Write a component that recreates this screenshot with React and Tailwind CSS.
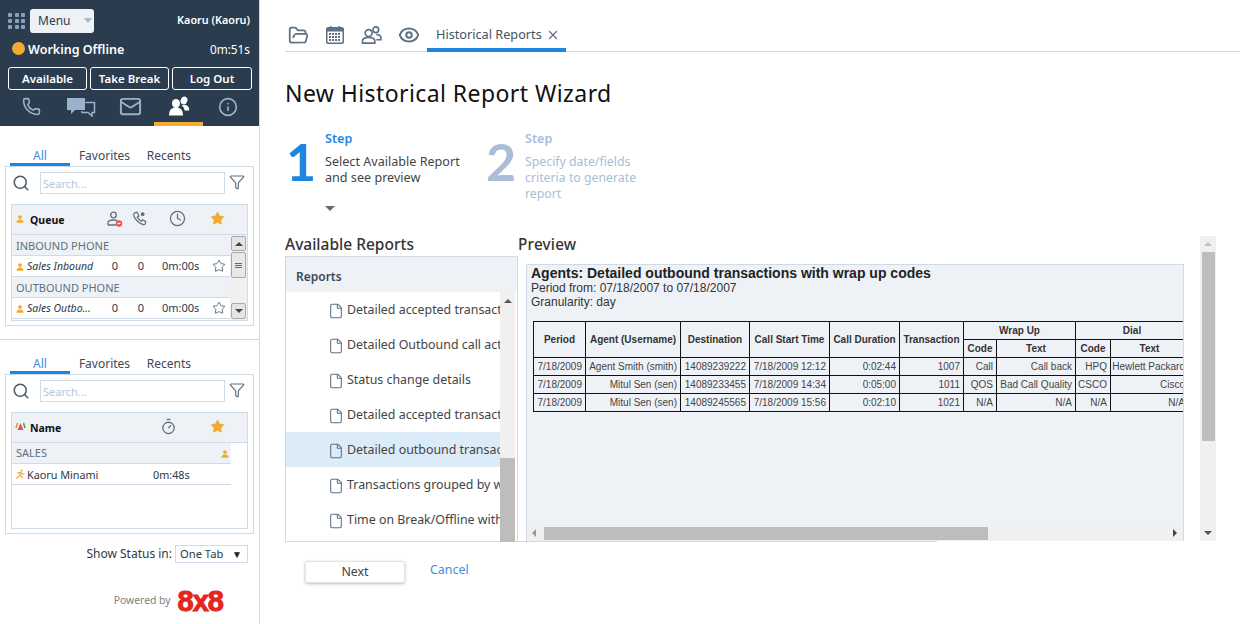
import React from "react";
import { Phone, Mail, Info, Search, Clock, Star, FolderOpen, Eye, X, File, Funnel, Timer } from "lucide-react";

const noto = "font-['Noto_Sans','Open_Sans',sans-serif]";

function Person({ className = "" }) {
  return (
    <svg viewBox="0 0 10 10" className={className} fill="#f0ab31">
      <circle cx="5" cy="2.6" r="2.4" />
      <path d="M0.5 9.8 C0.5 6.5 2.5 5.6 5 5.6 C7.5 5.6 9.5 6.5 9.5 9.8 Z" />
    </svg>
  );
}

function People({ className = "", stroke = "#5e7081" }) {
  return (
    <svg viewBox="0 0 22 20" className={className} fill="none" stroke={stroke} strokeWidth="1.7">
      <circle cx="8" cy="8" r="3.6" />
      <path d="M1.5 18.5 V16.5 C1.5 13.5 4 12.5 8 12.5 C12 12.5 14.5 13.5 14.5 16.5 V18.5 Z" />
      <circle cx="15.5" cy="4.5" r="3" />
      <path d="M16 9.5 C19 9.5 20.8 10.5 20.8 13 V15 H16" />
    </svg>
  );
}

function Tabs() {
  return (
    <div className="flex h-[20px] pl-[10px] text-[12px] leading-[20px] text-[#3a4a58]">
      <div className="w-[60px] border-b-[3px] border-[#1f86e0] text-center text-[#3b8ee0]">All</div>
      <div className="w-[69px] text-center">Favorites</div>
      <div className="w-[60px] text-center">Recents</div>
    </div>
  );
}

function SearchRow() {
  return (
    <div className="flex items-center h-[22px] pl-[7px]">
      <Search size={18} strokeWidth={2} className="text-[#4a5a68] w-[18px] -ml-[1px]" />
      <div className="ml-[10px] w-[185px] h-[22px] border border-[#cfdbe8] pl-[2px] text-[11px] leading-[22px] text-[#b4c4da]">Search...</div>
      <Funnel size={16} strokeWidth={1.8} className="ml-[4px] text-[#5e7081] -mt-[3px]" />
    </div>
  );
}

function QueueRow({ name }) {
  return (
    <div className="flex items-center h-[21px] pt-[1px] border-b border-[#cfdbe8] text-[11px] text-[#2b3a48] bg-white">
      <Person className="w-[8px] h-[8px] ml-[4px] mr-[3px] shrink-0" />
      <div className="w-[75px] italic truncate text-[10.5px]">{name}</div>
      <div className="w-[26px] text-center">0</div>
      <div className="w-[26px] text-center">0</div>
      <div className="w-[42px] ml-[8px] whitespace-nowrap">0m:00s</div>
      <Star size={14} strokeWidth={1.7} className="ml-[8px] text-[#5e7081] -mt-[2px]" />
    </div>
  );
}

function ScrollTri({ dir, color, className = "" }) {
  const m = {
    up: "border-l-[4px] border-r-[4px] border-b-[4px] border-l-transparent border-r-transparent",
    down: "border-l-[4px] border-r-[4px] border-t-[4px] border-l-transparent border-r-transparent",
  };
  return <span className={`w-0 h-0 ${m[dir]} ${color} ${className}`} />;
}

function Sidebar() {
  return (
    <div className={`w-[260px] shrink-0 h-[624px] border-r border-[#cfd8e3] ${noto}`}>
      <div className="h-[126px] bg-[#2b3c4e] text-white">
        <div className="flex items-center h-[40px] pl-[8px] pr-[9px] pt-[1px]">
          <div className="grid grid-cols-3 gap-[2px] w-[18px]">
            {Array.from({ length: 9 }).map((_, i) => (
              <div key={i} className="w-[4px] h-[4px] bg-[#8aa0b8] rounded-[1px]" />
            ))}
          </div>
          <div className="ml-[4px] w-[64px] h-[24px] bg-[#eef2f7] rounded-[3px] flex items-center pl-[8px] text-[12px] text-[#2b3c4e]">
            Menu
            <span className="ml-[14px] w-0 h-0 border-l-[4px] border-r-[4px] border-t-[5px] border-l-transparent border-r-transparent border-t-[#a9b7c6]" />
          </div>
          <div className="ml-auto text-[10.8px] font-semibold">Kaoru (Kaoru)</div>
        </div>
        <div className="flex items-center h-[20px] pl-[12px] pr-[9px]">
          <div className="w-[13px] h-[13px] rounded-full bg-[#f2ab33] -mt-[3px]" />
          <div className="ml-[3px] text-[12.5px] font-semibold">Working Offline</div>
          <div className="ml-auto text-[11.8px]">0m:51s</div>
        </div>
        <div className="flex gap-[3px] pl-[8px] mt-[7px]">
          {[["Available", "w-[79px]"], ["Take Break", "w-[79px]"], ["Log Out", "w-[80px]"]].map(([t, w]) => (
            <div key={t} className={`${w} h-[23px] border border-white rounded-[3px] text-[11.5px] font-semibold text-center leading-[21px]`}>{t}</div>
          ))}
        </div>
        <div className="flex h-[36px] pl-[8px]">
          <div className="w-[46px] flex justify-center pt-[7px]">
            <Phone size={19} strokeWidth={2} className="text-[#9cb2cc]" />
          </div>
          <div className="w-[53px] flex justify-center pt-[7px]">
            <svg width="30" height="20" viewBox="0 0 30 20">
              <path d="M1 1 H19 V13 H9 L5 17 V13 H1 Z" fill="#9cb2cc" />
              <path d="M19.5 5.5 H28.5 V15.5 H26 V19 L22 15.5 H16 V14" fill="none" stroke="#9cb2cc" strokeWidth="1.5" />
            </svg>
          </div>
          <div className="w-[47px] flex justify-center pt-[5px]">
            <Mail size={23} strokeWidth={2} className="text-[#9cb2cc]" />
          </div>
          <div className="w-[49px] flex justify-center pt-[6px] border-b-[4px] border-[#f2ab33]">
            <svg width="22" height="20" viewBox="0 0 22 20" fill="white">
              <ellipse cx="8" cy="7.5" rx="4" ry="4.5" />
              <path d="M1 19.5 C1 13.5 4 11.5 8 11.5 C12 11.5 15 13.5 15 19.5 Z" />
              <ellipse cx="16" cy="4.5" rx="3.3" ry="4" transform="rotate(20 16 4.5)" />
              <path d="M13.5 9.5 C15 9 16.5 9 18 9 C20.5 10 21.8 12 21 14.5 H16.5 C16.5 12.5 15.5 10.5 13.5 9.5 Z" />
            </svg>
          </div>
          <div className="w-[50px] flex justify-center pt-[7px]">
            <Info size={20} strokeWidth={2} className="text-[#9cb2cc]" />
          </div>
        </div>
      </div>

      <div className="mt-[20px]">
        <Tabs />
        <div className="mx-[5px] h-[160px] border border-[#cfdbe8] pt-[5px]">
          <SearchRow />
          <div className="mx-[5px] mt-[10px] h-[117px] border border-[#cfdbe8]">
            <div className="flex items-center h-[30px] bg-[#eef2f7] border-b border-[#cfdbe8] text-[#111]">
              <Person className="w-[8px] h-[8px] ml-[4px] shrink-0 -mt-[2px]" />
              <div className="ml-[6px] mt-[2px] text-[10.5px] font-bold w-[76px]">Queue</div>
              <svg width="16" height="16" viewBox="0 0 16 16" fill="none" stroke="#5e7081" strokeWidth="1.3" className="ml-[1px] -mt-[2px]">
                <circle cx="6.5" cy="4" r="2.8" />
                <path d="M1 14 V12 C1 10 3 9 6.5 9 C8 9 9 9.2 10 9.6 M1 14 H9" />
                <circle cx="12" cy="12.5" r="3.2" fill="#e8505b" stroke="none" />
                <path d="M10.5 12.5 H13.5" stroke="white" />
              </svg>
              <svg width="15" height="15" viewBox="0 0 24 24" fill="none" stroke="#5e7081" strokeWidth="2" className="ml-[9px] -mt-[3px]">
                <path d="M4 3 L8 2 L11 8 L8.5 10 C10 13 12 15 15 16.5 L17 14 L22 17 L21 21 C20 22 18 22 16 21 C9 18 5 13 3 8 C2.5 6 3 4 4 3 Z" />
                <circle cx="17" cy="5" r="3" fill="#5e7081" stroke="none" />
              </svg>
              <Clock size={17} strokeWidth={1.8} className="ml-[22px] text-[#5e7081] -mt-[3px]" />
              <Star size={15} fill="#f0ab31" strokeWidth={1} className="ml-[24px] text-[#f0ab31] -mt-[3px]" />
            </div>
            <div className="flex h-[85px]">
              <div className="w-[219px]">
                <div className="h-[21px] bg-[#eef2f7] border-b border-[#cfdbe8] pl-[4px] text-[11px] leading-[22px] text-[#5e7081]">INBOUND PHONE</div>
                <QueueRow name="Sales Inbound" />
                <div className="h-[21px] bg-[#eef2f7] border-b border-[#cfdbe8] pl-[4px] text-[11px] leading-[22px] text-[#5e7081]">OUTBOUND PHONE</div>
                <QueueRow name="Sales Outbo..." />
              </div>
              <div className="w-[17px] bg-[#f0f0f0] flex flex-col pt-[1px] px-[1px] pb-[1px]">
                <div className="h-[15px] rounded-[2px] border border-[#a9a9a9] bg-[#e4e4e4] flex items-center justify-center">
                  <ScrollTri dir="up" color="border-b-[#444]" />
                </div>
                <div className="h-[26px] mt-[1px] rounded-[2px] border border-[#a9a9a9] bg-[#e8e8e8] flex flex-col items-center justify-center gap-[1px]">
                  <i className="w-[7px] h-[1px] bg-[#666]" /><i className="w-[7px] h-[1px] bg-[#666]" /><i className="w-[7px] h-[1px] bg-[#666]" />
                </div>
                <div className="mt-auto h-[16px] rounded-[2px] border border-[#a9a9a9] bg-[#e4e4e4] flex items-center justify-center">
                  <ScrollTri dir="down" color="border-t-[#444]" />
                </div>
              </div>
            </div>
          </div>
        </div>
      </div>

      <div className="mt-[13px] border-t border-[#cfd8e3] pt-[14px]">
        <Tabs />
        <div className="mx-[5px] h-[160px] border border-[#cfdbe8] pt-[5px]">
          <SearchRow />
          <div className="mx-[5px] mt-[10px] h-[117px] border border-[#cfdbe8]">
            <div className="flex items-center h-[30px] bg-[#eef2f7] border-b border-[#cfdbe8] text-[#111]">
              <svg width="11" height="10" viewBox="0 0 11 10" className="ml-[3px] -mt-[3px] shrink-0">
                <path d="M2.5 9 L5.5 2 L8.5 9 Z" fill="#e8505b" />
                <path d="M1 7 L2.5 2" stroke="#e49a2c" strokeWidth="1.5" />
                <path d="M10 7 L8.5 2" stroke="#45a35a" strokeWidth="1.5" />
              </svg>
              <div className="ml-[4px] mt-[2px] text-[10.5px] font-bold w-[132px]">Name</div>
              <Timer size={17} strokeWidth={1.8} className="-ml-[2px] text-[#5e7081] -mt-[3px]" />
              <Star size={15} fill="#f0ab31" strokeWidth={1} className="ml-[33px] text-[#f0ab31] -mt-[3px]" />
            </div>
            <div className="w-[219px]">
              <div className="flex items-center justify-between h-[21px] pt-[1px] bg-[#eef2f7] border-b border-[#cfdbe8] pl-[4px] pr-[2px] text-[11px] text-[#5e7081]">
                SALES
                <Person className="w-[8px] h-[8px]" />
              </div>
              <div className="flex items-center h-[21px] pt-[2px] border-b border-[#cfdbe8] text-[10.8px] text-[#2b3a48]">
                <svg width="10" height="10" viewBox="0 0 10 10" className="ml-[3px] mr-[2px] shrink-0 -mt-[3px]" fill="none" stroke="#f0ab31" strokeWidth="1.2">
                  <circle cx="6.5" cy="1.6" r="1.1" fill="#f0ab31" stroke="none" />
                  <path d="M2 4 L5.5 3.5 L4.5 7 L1 9.5 M5 6 L7 7.5 L7 9.5 M5.5 3.5 L8 5 L9.5 4.5" />
                </svg>
                <div className="w-[126px]">Kaoru Minami</div>
                <div>0m:48s</div>
              </div>
            </div>
          </div>
        </div>
      </div>

      <div className="flex items-center justify-end h-[18px] mt-[11px] pr-[11px] text-[12px] leading-[20px] text-[#2b3a48]">
        Show Status in:
        <div className="ml-[3px] w-[73px] h-[18px] border border-[#cfdbe8] flex items-center pl-[4px] text-[11.2px]">
          One Tab
          <span className="ml-auto mr-[5px] text-[10px] leading-none text-[#222]">▼</span>
        </div>
      </div>
      <div className="flex items-center justify-end mt-[25px] pr-[36px] h-[26px]">
        <span className="text-[10.4px] text-[#808080] mr-[7px]">Powered by</span>
        <span className="font-['Liberation_Sans',sans-serif] font-bold text-[29px] leading-none tracking-[-1px] text-[#e5261f] [-webkit-text-stroke:1px_#e5261f]">8x8</span>
      </div>
    </div>
  );
}

const th = "border border-[#111] font-bold text-center px-0 text-[10px] leading-[12px] text-[#333] whitespace-nowrap";
const td = "border border-[#111] text-right pr-[3px] text-[10px] leading-[12px] text-[#444] whitespace-nowrap overflow-hidden";

const rows = [
  ["7/18/2009", "Agent Smith (smith)", "14089239222", "7/18/2009 12:12", "0:02:44", "1007", "Call", "Call back", "HPQ", "Hewlett Packard"],
  ["7/18/2009", "Mitul Sen (sen)", "14089233455", "7/18/2009 14:34", "0:05:00", "1011", "QOS", "Bad Call Quality", "CSCO", "Cisco"],
  ["7/18/2009", "Mitul Sen (sen)", "14089245565", "7/18/2009 15:56", "0:02:10", "1021", "N/A", "N/A", "N/A", "N/A"],
];

function ReportTable() {
  return (
    <table className="border-collapse table-fixed w-[655px] ml-[6px] mt-[12px] font-['Liberation_Sans',sans-serif]">
      <colgroup>
        {[52, 95, 69, 80, 70, 64, 33, 79, 35, 78].map((w, i) => <col key={i} style={{ width: w }} />)}
      </colgroup>
      <thead>
        <tr className="h-[18px]">
          {["Period", "Agent (Username)", "Destination", "Call Start Time", "Call Duration", "Transaction"].map((t) => (
            <th key={t} rowSpan={2} className={th}>{t}</th>
          ))}
          <th colSpan={2} className={th}>Wrap Up</th>
          <th colSpan={2} className={th}>Dial</th>
        </tr>
        <tr className="h-[18px]">
          <th className={th}>Code</th><th className={th}>Text</th><th className={th}>Code</th><th className={th}>Text</th>
        </tr>
      </thead>
      <tbody>
        {rows.map((r, i) => (
          <tr key={i} className="h-[18px]">
            {r.map((c, j) => <td key={j} className={td}>{c}</td>)}
          </tr>
        ))}
      </tbody>
    </table>
  );
}

const reports = [
  "Detailed accepted transactions",
  "Detailed Outbound call activity",
  "Status change details",
  "Detailed accepted transactions",
  "Detailed outbound transactions",
  "Transactions grouped by wrap up",
  "Time on Break/Offline with codes",
];

function Main() {
  return (
    <div className={`flex-1 min-w-0 pl-[25px] pr-[20px] ${noto} text-[#333]`}>
      <div className="flex items-end h-[52px] border-b border-[#cfd8e3]">
        <div className="flex items-center h-[51px] pt-[19px] text-[#5e7081]">
          <FolderOpen size={21} strokeWidth={2} className="ml-[3px]" />
          <svg width="20" height="20" viewBox="0 0 20 20" className="ml-[16px]" fill="#5e7081">
            <path fillRule="evenodd" d="M3 2 H5 V1 H6.5 V2 H13.5 V1 H15 V2 H17 C18 2 19 3 19 4 V17 C19 18 18 19 17 19 H3 C2 19 1 18 1 17 V4 C1 3 2 2 3 2 Z M2.5 6.5 V17 C2.5 17.3 2.7 17.5 3 17.5 H17 C17.3 17.5 17.5 17.3 17.5 17 V6.5 Z" />
            {[4, 7, 10, 13].map((x) => [8, 11, 14].map((y) => <rect key={x + "-" + y} x={x} y={y} width="2" height="2" />))}
          </svg>
          <People className="w-[21px] h-[20px] ml-[16px]" />
          <Eye size={22} strokeWidth={2.2} className="ml-[16px]" />
        </div>
        <div className="ml-[7px] w-[139px] h-[36px] pt-[5px] border-b-[4px] border-[#1f86e0] -mb-[1px] flex items-center pl-[9px] text-[12.7px] text-[#44535f]">
          Historical Reports
          <X size={14} strokeWidth={2.2} className="ml-[4px] text-[#5e7081]" />
        </div>
      </div>

      <h1 className="mt-[23px] text-[23px] leading-[36px] font-normal text-[#111] tracking-[0.42px]">New Historical Report Wizard</h1>

      <div className="flex mt-[17px] h-[103px]">
        <div className="flex w-[201px]">
          <div className="w-[40px] pl-[1px] text-[52px] leading-[66px] font-bold font-['Lato',sans-serif] text-[#1f86e0]">1</div>
          <div className="text-[12.6px] leading-[16px] text-[#444]">
            <div className="font-semibold text-[#1f86e0] mt-[3px] mb-[7px]">Step</div>
            Select Available Report<br />and see preview
            <div className="mt-[20px] w-0 h-0 border-l-[5px] border-r-[5px] border-t-[5px] border-l-transparent border-r-transparent border-t-[#5e6a75]" />
          </div>
        </div>
        <div className="flex">
          <div className="w-[39px] text-[52px] leading-[66px] font-bold font-['Lato',sans-serif] text-[#a9bdd8]">2</div>
          <div className="text-[12.3px] leading-[16px] text-[#a9bdd8]">
            <div className="font-semibold mt-[3px] mb-[7px] text-[12.6px]">Step</div>
            Specify date/fields<br />criteria to generate<br />report
          </div>
        </div>
      </div>

      <div className="flex h-[306px] mt-[4px]">
        <div className="w-[233px] shrink-0">
          <div className="h-[21px] text-[15.5px] leading-[18px] font-medium text-[#333]">Available Reports</div>
          <div className="h-[285px] border border-b-0 border-[#cfdbe8]">
            <div className="h-[35px] bg-[#eef2f7] pl-[10px] text-[12px] leading-[40px] font-semibold text-[#3a4a58]">Reports</div>
            <div className="flex h-[250px] pr-[2px]">
              <div className="w-[214px] overflow-hidden">
                {reports.map((r, i) => (
                  <div key={i} className={`flex items-center h-[35px] pl-[42px] pt-[1px] text-[12.4px] whitespace-nowrap overflow-hidden text-[#444] ${i === 4 ? "bg-[#dcebf8]" : ""}`}>
                    <File size={16} strokeWidth={1.6} className="shrink-0 text-[#5e7081] mr-[3px] mt-[1px]" />
                    {r}
                  </div>
                ))}
              </div>
              <div className="w-[15px] bg-[#f0f0f0] flex flex-col items-center">
                <ScrollTri dir="up" color="border-b-[#555]" className="mt-[7px]" />
                <div className="mt-auto w-full h-[84px] bg-[#bdbdbd]" />
              </div>
            </div>
          </div>
        </div>

        <div className="flex-1 min-w-0 flex">
          <div className="w-[666px]">
            <div className="h-[21px] text-[15.3px] leading-[18px] font-medium text-[#333] tracking-[0.2px]">Preview</div>
            <div className="w-[658px] h-[277px] ml-[8px] mt-[8px] border border-b-0 border-[#cfdbe8] bg-[#eef2f7] flex flex-col overflow-hidden">
              <div className="flex-1 min-h-0 overflow-hidden">
                <div className="pl-[4px] pt-[1px] font-['Liberation_Sans',sans-serif] text-[#333] text-[12px] leading-[14px]">
                  <div className="font-bold text-[14px] leading-[15px] text-[#222]">Agents: Detailed outbound transactions with wrap up codes</div>
                  <div>Period from: 07/18/2007 to 07/18/2007</div>
                  <div>Granularity: day</div>
                </div>
                <ReportTable />
              </div>
              <div className="h-[16px] bg-[#f0f0f0] flex items-center">
                <span className="ml-[5px] w-0 h-0 border-t-[4px] border-b-[4px] border-r-[4px] border-t-transparent border-b-transparent border-r-[#999]" />
                <div className="ml-[8px] w-[444px] h-[13px] bg-[#bdbdbd]" />
                <span className="ml-auto mr-[6px] w-0 h-0 border-t-[4px] border-b-[4px] border-l-[4px] border-t-transparent border-b-transparent border-l-[#444]" />
              </div>
            </div>
          </div>
          <div className="ml-[16px] w-[16px] mt-[1px] h-[305px] bg-[#f0f0f0] flex flex-col items-center pt-[6px] pb-[6px]">
            <ScrollTri dir="up" color="border-b-[#bbb]" />
            <div className="w-[13px] mt-[6px] h-[189px] bg-[#bdbdbd]" />
            <ScrollTri dir="down" color="border-t-[#555]" className="mt-auto" />
          </div>
        </div>
      </div>
      <div className="h-[1px] w-[652px] bg-[#cfdbe8]" />

      <div className="flex items-center mt-[19px] ml-[20px]">
        <div className="w-[100px] h-[22px] border border-[#dfe5ec] rounded-[2px] shadow-[0_1px_3px_rgba(90,110,140,0.45)] text-center text-[12.4px] leading-[20px] text-[#444]">Next</div>
        <div className="ml-[25px] text-[12.4px] text-[#3b8ee0] -mt-[3px]">Cancel</div>
      </div>
    </div>
  );
}

export default function App() {
  return (
    <div className="flex w-[1260px] h-[624px] bg-white overflow-hidden">
      <Sidebar />
      <Main />
    </div>
  );
}
